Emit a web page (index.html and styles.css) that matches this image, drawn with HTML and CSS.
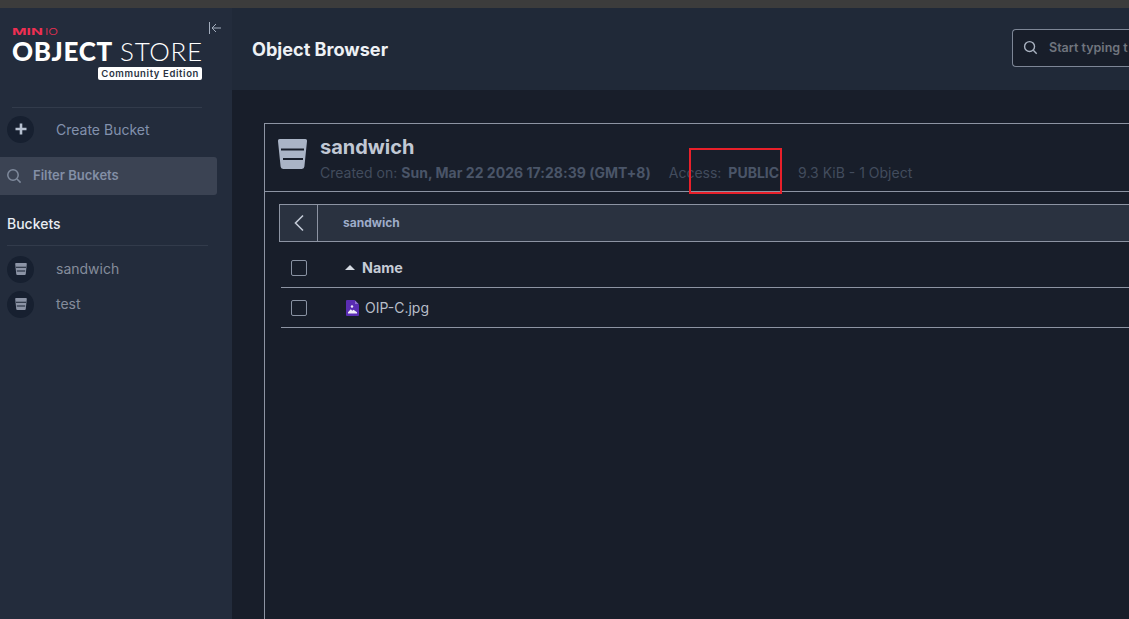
FILE: index.html
```html
<!DOCTYPE html>
<html lang="en">
<head>
<meta charset="utf-8">
<title>Object Browser</title>
<link rel="stylesheet" href="styles.css">
</head>
<body>
<div class="topstrip"></div>
<div class="app">
  <aside class="sidebar">
    <div class="brand">
      <div class="brand-text">
        <div class="minio"><b>MIN</b><span>IO</span></div>
        <div class="store"><b>OBJECT</b> <span>STORE</span></div>
        <div class="edition-row"><span class="edition">Community Edition</span></div>
      </div>
      <svg class="collapse" viewBox="0 0 14 14" width="14" height="14"><path d="M1.500 1v12M13 7H4M8 3L4 7l4 4" fill="none" stroke="#a3adbd" stroke-width="1"/></svg>
    </div>
    <div class="divider brand-divider"></div>
    <div class="nav-row create">
      <span class="circle"><svg viewBox="0 0 14 14" width="14" height="14"><path d="M7 1.500v11M1.500 7h11" stroke="#b6c0d0" stroke-width="2.600" fill="none"/></svg></span>
      <span class="nav-label">Create Bucket</span>
    </div>
    <div class="filter">
      <svg viewBox="0 0 16 16" width="16" height="16"><circle cx="7" cy="7" r="5.200" fill="none" stroke="#7f8a9c" stroke-width="1.500"/><path d="M11 11l3.600 3.600" stroke="#7f8a9c" stroke-width="1.500"/></svg>
      <span class="filter-label">Filter Buckets</span>
    </div>
    <div class="buckets-title">Buckets</div>
    <div class="divider buckets-divider"></div>
    <div class="nav-row bucket">
      <span class="circle"><svg viewBox="0 0 29 30" width="12" height="12"><path d="M2 0h25a2 2 0 0 1 2 2.200l-2.600 25.400a2.600 2.600 0 0 1-2.600 2.400H5.200a2.600 2.600 0 0 1-2.600-2.400L0 2.200A2 2 0 0 1 2 0z" fill="#8c94a6"/><path d="M2 10.500h25M4 20h21" stroke="#172030" stroke-width="2.600"/></svg></span>
      <span class="nav-label muted">sandwich</span>
    </div>
    <div class="nav-row bucket second">
      <span class="circle"><svg viewBox="0 0 29 30" width="12" height="12"><path d="M2 0h25a2 2 0 0 1 2 2.200l-2.600 25.400a2.600 2.600 0 0 1-2.600 2.400H5.200a2.600 2.600 0 0 1-2.600-2.400L0 2.200A2 2 0 0 1 2 0z" fill="#8c94a6"/><path d="M2 10.500h25M4 20h21" stroke="#172030" stroke-width="2.600"/></svg></span>
      <span class="nav-label muted">test</span>
    </div>
  </aside>
  <div class="content">
    <header class="pagehead">
      <h1>Object Browser</h1>
      <div class="search">
        <svg viewBox="0 0 16 16" width="15" height="15"><circle cx="7" cy="7" r="5.300" fill="none" stroke="#a9b2c0" stroke-width="1.500"/><path d="M11 11l3.600 3.600" stroke="#a9b2c0" stroke-width="1.500"/></svg>
        <span>Start typing t</span>
      </div>
    </header>
    <main class="main">
      <section class="panel">
        <div class="bucket-head">
          <svg class="bucket-icon" viewBox="0 0 29 30" width="29" height="30"><path d="M2 0h25a2 2 0 0 1 2 2.200l-2.600 25.400a2.600 2.600 0 0 1-2.600 2.400H5.200a2.600 2.600 0 0 1-2.600-2.400L0 2.200A2 2 0 0 1 2 0z" fill="#aab4c6"/><path d="M3 10.500h23M5 20h20" stroke="#181e2a" stroke-width="2"/></svg>
          <div class="bucket-info">
            <div class="bucket-name">sandwich</div>
            <div class="meta">
              <span class="created">Created on: <b>Sun, Mar 22 2026 17:28:39 (GMT+8)</b></span>
              <span class="access">Access: <b>PUBLIC</b></span>
              <span>9.3 KiB - 1 Object</span>
            </div>
          </div>
        </div>
        <div class="browser">
          <div class="crumbs">
            <span class="back"><svg viewBox="0 0 12 18" width="12" height="18"><path d="M10 1.500L2.500 9l7.500 7.500" fill="none" stroke="#c3cad6" stroke-width="1.600"/></svg></span>
            <span class="crumb">sandwich</span>
          </div>
          <div class="row head-row">
            <span class="check"></span>
            <span class="sort"></span>
            <span class="col-name">Name</span>
          </div>
          <div class="row file-row">
            <span class="check"></span>
            <svg class="file-icon" viewBox="0 0 13 16" width="13" height="16"><path d="M1 0h7.500L13 4.500V15a1 1 0 0 1-1 1H1a1 1 0 0 1-1-1V1a1 1 0 0 1 1-1z" fill="#5a2db3"/><path d="M9 .5L12.500 4H9z" fill="#8e72cf"/><path d="M2 13.500v-1.300l2.800-3 1.500 1.500 1.200-1 3.500 2.600v1.200z" fill="#f0edf9"/><circle cx="6" cy="6.500" r="1.200" fill="#f0edf9"/></svg>
            <span class="file-name">OIP-C.jpg</span>
          </div>
        </div>
      </section>
    </main>
  </div>
</div>
<div class="annotation"></div>
</body>
</html>
```

FILE: styles.css
```css
* { box-sizing: border-box; }
html, body { margin: 0; height: 619px; overflow: hidden; }
body {
  position: relative;
  background: #181e2a;
  font-family: Inter, "Liberation Sans", sans-serif;
  color: #c8ced8;
}
.topstrip { height: 8px; background: #3c3c3c; }
.app { display: flex; height: 611px; }

.sidebar { width: 232px; flex: none; background: #232c3c; }
.brand { display: flex; height: 99px; padding: 0 0 0 12px; }
.brand-text { width: 190px; padding-top: 20px; }
.minio {
  display: flex; height: 8px; line-height: 8px; font-size: 9.500px;
  color: #ee2f52;
}
.minio b { display: block; width: 33px; font-weight: 700; transform-origin: left; transform: scaleX(1.65); }
.minio span { display: block; font-weight: 300; transform-origin: left; transform: scaleX(1.35); }
.store {
  font-family: Lato, sans-serif; font-size: 26px; line-height: 26px; color: #fff;
  white-space: nowrap; margin-top: 2px; letter-spacing: .65px;
}
.store b { font-weight: 900; }
.store span { font-weight: 300; }
.edition-row { display: flex; justify-content: flex-end; margin-top: 3px; }
.edition {
  background: #fff; color: #2a3342; border-radius: 2px; font-size: 9.500px; font-weight: 600;
  line-height: 13px; height: 13px; padding: 0 3px; letter-spacing: .62px; white-space: nowrap;
}
.collapse { margin: 13px 0 0 6px; }
.divider { height: 1px; background: #323b4b; }
.brand-divider { width: 190px; margin-left: 12px; }
.nav-row { display: flex; align-items: center; height: 28px; padding-left: 7px; }
.create { margin-top: 7px; }
.circle {
  width: 27px; height: 27px; border-radius: 50%; background: #172030;
  display: flex; align-items: center; justify-content: center; flex: none;
}
.nav-label { margin-left: 22px; font-size: 14px; color: #8291ad; }
.nav-label.muted { color: #858c9b; }
.filter {
  width: 217px; height: 38px; margin-top: 14px; background: #3b4353; border-radius: 0 3px 3px 0;
  display: flex; align-items: center; padding-left: 6px; gap: 11px;
  font-size: 13px; font-weight: 600; color: #838fa6;
}
.filter-label { margin-bottom: 2px; }
.buckets-title { margin: 20px 0 0 7px; font-size: 14px; font-weight: 500; line-height: 17px; color: #e9edf3; }
.buckets-divider { width: 201px; margin: 13px 0 0 7px; }
.bucket { margin-top: 9px; }
.bucket .nav-label { margin-bottom: 2px; }
.bucket.second { margin-top: 7px; }

.content { flex: 1; min-width: 0; display: flex; flex-direction: column; }
.pagehead {
  height: 82px; background: #202938; display: flex; align-items: center;
  justify-content: space-between; padding-left: 20px;
}
.pagehead h1 { margin: 0; font-size: 18.100px; font-weight: 700; color: #eef1f5; }
.search {
  width: 117px; flex: none; height: 38px; margin-top: -3px;
  border: 1px solid #7d8696; border-right: 0; border-radius: 4px 0 0 4px; background: #181e2a;
  display: flex; align-items: center; padding-left: 10px; gap: 11px;
  font-size: 12.500px; font-weight: 600; color: #70757e; white-space: nowrap; overflow: hidden;
}
.search svg { flex: none; }
.main { flex: 1; padding: 33px 0 0 32px; min-height: 0; }
.panel { height: 100%; border: 1px solid #8d94a3; border-right: 0; border-bottom: 0; }
.bucket-head { display: flex; height: 68px; border-bottom: 1px solid #8d94a3; padding-left: 13px; }
.bucket-icon { margin-top: 15px; flex: none; }
.bucket-info { margin-left: 13px; padding-top: 10px; }
.bucket-name { font-size: 20px; font-weight: 700; line-height: 26px; color: #c1c8d4; }
.meta { display: flex; margin-top: 4px; font-size: 14px; line-height: 18px; color: #424c5d; white-space: nowrap; }
.meta b { font-weight: 700; color: #4a5568; }
.created { margin-right: 18px; }
.created b { letter-spacing: .03px; }
.access { margin-right: 19px; }
.access b { margin-left: 3px; }

.browser { padding: 12px 0 0 14px; }
.crumbs { display: flex; height: 38px; border: 1px solid #8d94a3; border-right: 0; background: #2a3240; align-items: center; }
.back { width: 38px; height: 36px; border-right: 1px solid #8d94a3; display: flex; align-items: center; justify-content: center; flex: none; }
.crumb { margin-left: 25px; margin-bottom: 2px; font-size: 12px; font-weight: 700; color: #9eacc8; }
.row { display: flex; align-items: center; height: 40px; margin-left: 2px; border-bottom: 1px solid #8d94a3; padding-left: 10px; }
.head-row { margin-top: 6px; }
.check { width: 16px; height: 16px; border: 1px solid #8a93a3; border-radius: 2px; flex: none; }
.sort { width: 0; height: 0; margin-left: 38px; border: 5.500px solid transparent; border-top: 0; border-bottom: 5px solid #d6dbe3; }
.col-name { margin-left: 7px; font-size: 14.300px; font-weight: 700; color: #c6ccd6; }
.file-icon { margin-left: 39px; flex: none; }
.file-name { margin-left: 6px; font-size: 14px; color: #b7bdc8; }

.annotation {
  position: absolute; left: 689px; top: 148px; width: 93px; height: 46px;
  border: 2px solid #e8202a;
}
```
